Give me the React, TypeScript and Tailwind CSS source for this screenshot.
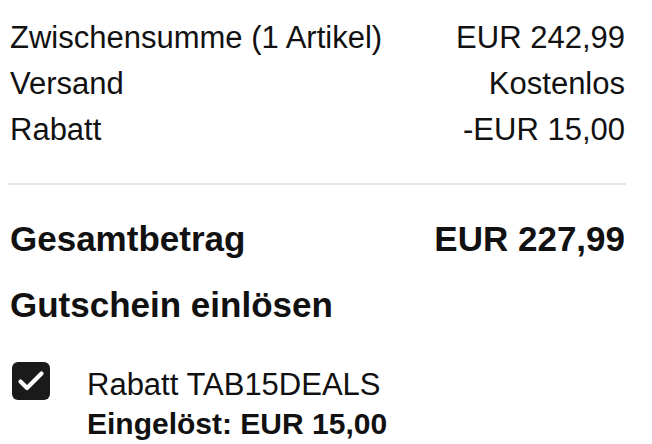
const rows = [
  { label: "Zwischensumme (1 Artikel)", value: "EUR 242,99" },
  { label: "Versand", value: "Kostenlos" },
  { label: "Rabatt", value: "-EUR 15,00" },
];

const App = () => {
  return (
    <div className="w-[652px] h-[444px] overflow-hidden bg-white text-[#111] font-['Liberation_Sans',Arial,sans-serif]">
      <div className="pl-[10px] pr-[27px] pt-[15px]">
        <div className="flex flex-col">
          {rows.map((row) => (
            <div
              key={row.label}
              className="flex justify-between text-[31px] leading-[46px]"
            >
              <span>{row.label}</span>
              <span>{row.value}</span>
            </div>
          ))}
        </div>
        <div className="mt-[30px] ml-[-2px] mr-[-1px] h-[2px] bg-[#e6e6e6]" />
        <div className="flex justify-between mt-[34px] text-[35px] font-bold leading-[40px]">
          <span>Gesamtbetrag</span>
          <span>EUR 227,99</span>
        </div>
        <div className="mt-[26px] text-[35px] font-bold leading-[40px]">
          Gutschein einlösen
        </div>
        <div className="flex items-start mt-[37px]">
          <div className="ml-[2px] w-[38px] h-[38px] rounded-[6px] bg-[#1a1a1a] shrink-0">
            <svg width="38" height="38" viewBox="0 0 38 38" fill="none">
              <path
                d="M8.5 19.5l6.5 6.5L29.5 11.5"
                stroke="white"
                strokeWidth="4.2"
                strokeLinecap="round"
                strokeLinejoin="round"
              />
            </svg>
          </div>
          <div className="ml-[37px] mt-[3px] flex flex-col leading-[39px]">
            <span className="text-[31px]">Rabatt TAB15DEALS</span>
            <span className="text-[30px] font-bold">Eingelöst: EUR 15,00</span>
          </div>
        </div>
      </div>
    </div>
  );
};

export default App;
